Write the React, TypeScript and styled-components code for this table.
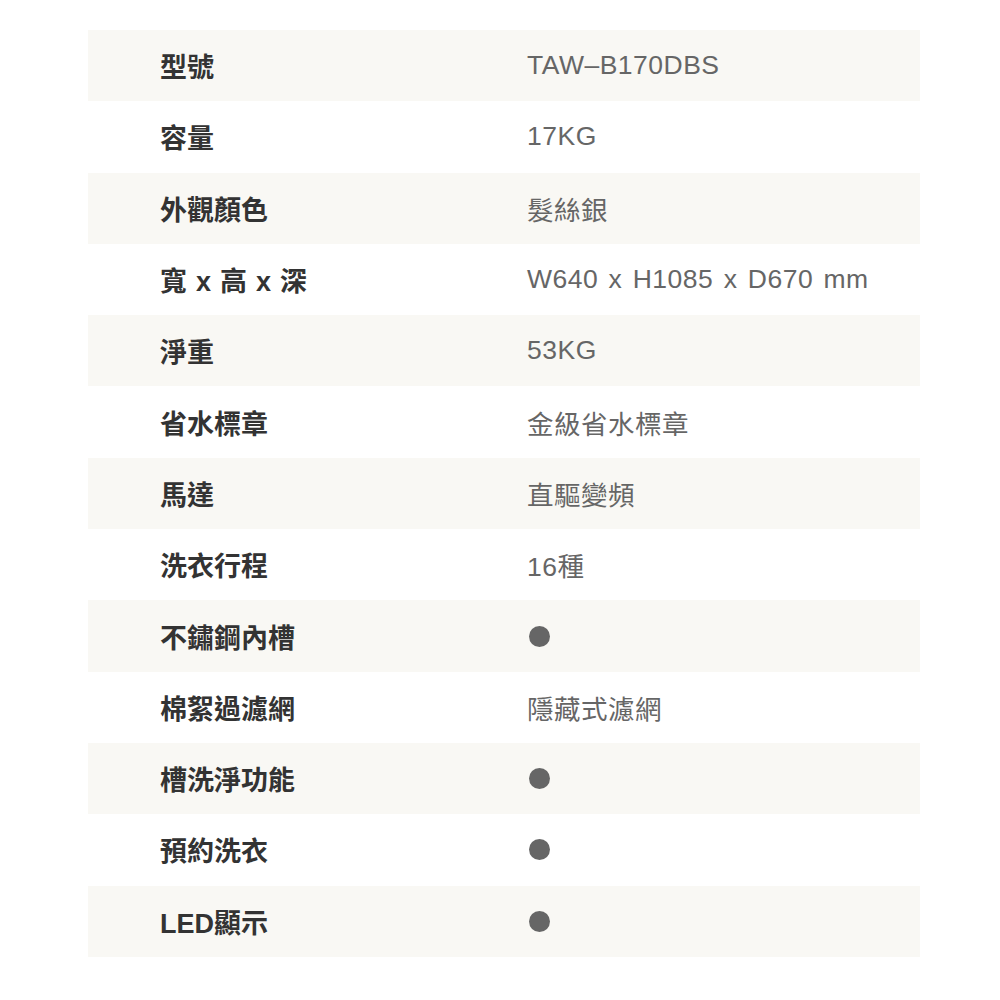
import styled, { createGlobalStyle } from "styled-components";

const GlobalStyle = createGlobalStyle`
  body {
    margin: 0;
    background: #ffffff;
    font-family: "Liberation Sans", "Noto Sans CJK TC", sans-serif;
  }
`;

interface Spec {
  label: string;
  value?: string;
}

const specs: Spec[] = [
  { label: "型號", value: "TAW–B170DBS" },
  { label: "容量", value: "17KG" },
  { label: "外觀顏色", value: "髮絲銀" },
  { label: "寬 x 高 x 深", value: "W640 x H1085 x D670 mm" },
  { label: "淨重", value: "53KG" },
  { label: "省水標章", value: "金級省水標章" },
  { label: "馬達", value: "直驅變頻" },
  { label: "洗衣行程", value: "16種" },
  { label: "不鏽鋼內槽" },
  { label: "棉絮過濾網", value: "隱藏式濾網" },
  { label: "槽洗淨功能" },
  { label: "預約洗衣" },
  { label: "LED顯示" },
];

const App = () => {
  return (
    <Page>
      <GlobalStyle />
      <SpecTable>
        {specs.map((item, i) => (
          <SpecRow key={item.label} $shaded={i % 2 === 0}>
            <Label>{item.label}</Label>
            <Value>{item.value ? item.value : <Dot />}</Value>
          </SpecRow>
        ))}
      </SpecTable>
    </Page>
  );
};

export default App;

const Page = styled.div`
  width: 1000px;
  height: 1000px;
  padding: 30px 80px 0 88px;
  box-sizing: border-box;
`;

const SpecTable = styled.div`
  display: flex;
  flex-direction: column;
  width: 832px;
`;

const SpecRow = styled.div<{ $shaded: boolean }>`
  display: grid;
  grid-template-columns: 439px 1fr;
  align-items: center;
  height: 71.3px;
  background: ${(p) => (p.$shaded ? "#f9f8f4" : "#ffffff")};
`;

const Label = styled.div`
  padding-left: 72px;
  font-size: 27px;
  font-weight: 700;
  color: #333333;
  word-spacing: 1.5px;
`;

const Value = styled.div`
  font-size: 26.5px;
  color: #666666;
  letter-spacing: 0.5px;
  word-spacing: 2.5px;
  display: flex;
  align-items: center;
`;

const Dot = styled.span`
  display: block;
  width: 21px;
  height: 21px;
  margin-left: 2px;
  border-radius: 50%;
  background: #666666;
`;
